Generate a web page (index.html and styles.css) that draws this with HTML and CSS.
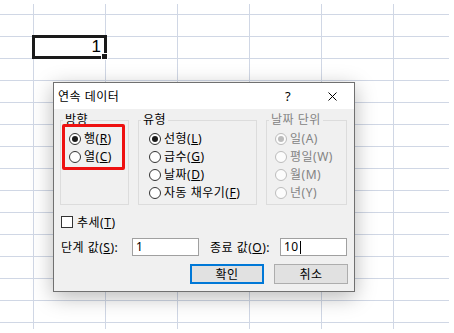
FILE: index.html
```html
<!DOCTYPE html>
<html lang="ko">
<head>
    <meta charset="UTF-8">
    <title>연속 데이터</title>
    <link rel="stylesheet" href="styles.css">
</head>
<body>
    <div class="sheet">
        <div class="cell-active">
            <span class="cell-value">1</span>
            <i class="fill-handle"></i>
        </div>
    </div>

    <!-- 대화 상자 -->
    <div class="dialog">
        <div class="titlebar">
            <span class="title">연속 데이터</span>
            <span class="cap-btn help">?</span>
            <span class="cap-btn close">
                <svg width="9" height="9" viewBox="0 0 9 9">
                    <path d="M0.5 0.5 L8.5 8.5 M8.5 0.5 L0.5 8.5" stroke="#000" stroke-width="1" fill="none"/>
                </svg>
            </span>
        </div>
        <div class="dlg-body">
            <div class="groups">
                <fieldset class="group g-dir">
                    <legend>방향</legend>
                    <div class="opt"><span class="radio on"></span><span>행(<u>R</u>)</span></div>
                    <div class="opt"><span class="radio"></span><span>열(<u>C</u>)</span></div>
                </fieldset>
                <fieldset class="group g-type">
                    <legend>유형</legend>
                    <div class="opt"><span class="radio on"></span><span>선형(<u>L</u>)</span></div>
                    <div class="opt"><span class="radio"></span><span>급수(<u>G</u>)</span></div>
                    <div class="opt"><span class="radio"></span><span>날짜(<u>D</u>)</span></div>
                    <div class="opt"><span class="radio"></span><span>자동 채우기(<u>F</u>)</span></div>
                </fieldset>
                <fieldset class="group g-unit disabled">
                    <legend>날짜 단위</legend>
                    <div class="opt"><span class="radio on"></span><span>일(A)</span></div>
                    <div class="opt"><span class="radio"></span><span>평일(W)</span></div>
                    <div class="opt"><span class="radio"></span><span>월(M)</span></div>
                    <div class="opt"><span class="radio"></span><span>년(Y)</span></div>
                </fieldset>
            </div>

            <div class="check-row"><span class="checkbox"></span><span>추세(<u>T</u>)</span></div>

            <div class="input-row">
                <span class="field-label lbl-step">단계 값(<u>S</u>):</span>
                <span class="textbox tb-step">1</span>
                <span class="field-label lbl-stop">종료 값(<u>O</u>):</span>
                <span class="textbox tb-stop"><span>10</span><i class="caret"></i></span>
            </div>

            <div class="btn-row">
                <span class="btn btn-ok">확인</span>
                <span class="btn">취소</span>
            </div>
        </div>
        <div class="highlight"></div>
    </div>
</body>
</html>
```

FILE: styles.css
```css
body {
    margin: 0;
    background: #fff;
    font-family: "Noto Sans", "Noto Sans CJK KR", sans-serif;
    font-size: 12px;
    color: #000;
}
/* 워크시트 격자 */
.sheet {
    position: relative;
    margin-top: 4px;
    width: 449px;
    height: 325px;
    background-image:
        linear-gradient(to right, #d0d7e5 1px, transparent 1px),
        linear-gradient(to bottom, #d0d7e5 1px, transparent 1px);
    background-size: 72px 22px, 72px 22px;
    background-position: 33px 0, 0 10px;
}
.cell-active {
    position: absolute;
    left: 32px;
    top: 31px;
    width: 75px;
    height: 24px;
    box-sizing: border-box;
    border: 3px solid #1a1a1a;
    background: #fff;
    text-align: right;
    padding-right: 3px;
}
.cell-value {
    font-family: "Liberation Sans", Arial, sans-serif;
    font-size: 17px;
    line-height: 18px;
}
.fill-handle {
    position: absolute;
    right: -4px;
    bottom: -4px;
    width: 5px;
    height: 5px;
    background: #1a1a1a;
    border: 1px solid #fff;
}
/* 대화 상자 */
.dialog {
    position: absolute;
    left: 53px;
    top: 82px;
    width: 302px;
    height: 210px;
    box-sizing: border-box;
    border: 1px solid #707070;
    background: #f0f0f0;
    box-shadow: 0 5px 20px rgba(0, 0, 0, 0.28);
    letter-spacing: 0.5px;
}
.titlebar {
    display: flex;
    align-items: center;
    height: 26px;
    background: #fff;
}
.title {
    padding-left: 4px;
    flex: 1;
}
.cap-btn {
    width: 44px;
    height: 26px;
    display: flex;
    align-items: center;
    justify-content: center;
}
.help {
    font-size: 13px;
}
.dlg-body {
    padding: 3px 6px 0 6px;
}
.groups {
    display: flex;
    gap: 9px;
}
.group {
    margin: 0;
    padding: 2px 0 0 0;
    min-width: 0;
    height: 93px;
    box-sizing: border-box;
    border: 1px solid #dcdcdc;
}
.g-dir { width: 69px; }
.g-type { width: 119px; }
.g-unit { width: 81px; }
.group legend {
    margin-left: 2px;
    padding: 0 2px;
    line-height: 16px;
}
.opt {
    display: flex;
    align-items: center;
    gap: 3px;
    height: 18px;
    line-height: 18px;
    margin-left: 8px;
    white-space: nowrap;
}
.g-type .opt { margin-left: 10px; }
.radio {
    position: relative;
    width: 12px;
    height: 12px;
    box-sizing: border-box;
    border: 1px solid #333;
    border-radius: 50%;
    background: #fff;
}
.radio.on::after {
    content: "";
    position: absolute;
    left: 2px;
    top: 2px;
    width: 6px;
    height: 6px;
    border-radius: 50%;
    background: #1a1a1a;
}
.disabled {
    color: #838383;
}
.disabled .radio {
    border-color: #bcbcbc;
    background: #fcfcfc;
}
.disabled .radio.on::after {
    background: #bcbcbc;
}
.check-row {
    display: flex;
    align-items: center;
    gap: 4px;
    height: 18px;
    margin-top: 8px;
    padding-left: 1px;
}
.checkbox {
    width: 12px;
    height: 12px;
    box-sizing: border-box;
    border: 1px solid #333;
    background: #fff;
}
.input-row {
    display: flex;
    align-items: center;
    height: 18px;
    margin-top: 7px;
}
.field-label {
    padding-left: 1px;
    white-space: nowrap;
}
.lbl-step { width: 71px; }
.lbl-stop { width: 70px; margin-left: 10px; }
.textbox {
    display: flex;
    align-items: center;
    height: 18px;
    box-sizing: border-box;
    border: 1px solid #a0a0a0;
    background: #fff;
    padding-left: 3px;
    line-height: 16px;
}
.tb-step { width: 67px; }
.tb-stop { width: 67px; }
.caret {
    display: inline-block;
    width: 1px;
    height: 13px;
    margin-left: 1px;
    background: #000;
}
.btn-row {
    display: flex;
    justify-content: flex-end;
    gap: 10px;
    margin-top: 8px;
}
.btn {
    display: flex;
    align-items: center;
    justify-content: center;
    width: 74px;
    height: 20px;
    box-sizing: border-box;
    border: 1px solid #adadad;
    background: #e1e1e1;
}
.btn-ok {
    border: 2px solid #0078d7;
}
/* 강조 표시 */
.highlight {
    position: absolute;
    left: 8px;
    top: 41px;
    width: 63px;
    height: 46px;
    box-sizing: border-box;
    border: 3px solid #ee1111;
    border-radius: 2px;
}
```
